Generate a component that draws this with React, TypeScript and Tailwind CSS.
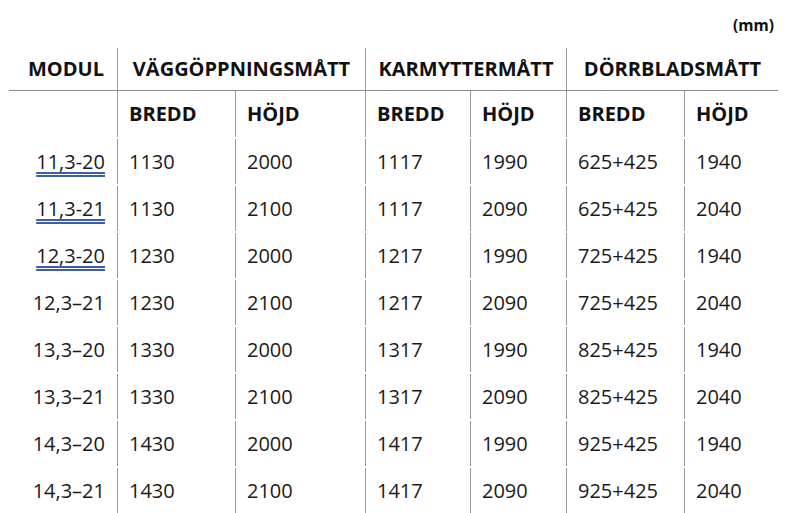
const widths = [108, 118, 130, 105, 96, 118, 94];

const rows: { modul: string; link?: boolean; vals: string[] }[] = [
  { modul: "11,3-20", link: true, vals: ["1130", "2000", "1117", "1990", "625+425", "1940"] },
  { modul: "11,3-21", link: true, vals: ["1130", "2100", "1117", "2090", "625+425", "2040"] },
  { modul: "12,3-20", link: true, vals: ["1230", "2000", "1217", "1990", "725+425", "1940"] },
  { modul: "12,3–21", vals: ["1230", "2100", "1217", "2090", "725+425", "2040"] },
  { modul: "13,3–20", vals: ["1330", "2000", "1317", "1990", "825+425", "1940"] },
  { modul: "13,3–21", vals: ["1330", "2100", "1317", "2090", "825+425", "2040"] },
  { modul: "14,3–20", vals: ["1430", "2000", "1417", "1990", "925+425", "1940"] },
  { modul: "14,3–21", vals: ["1430", "2100", "1417", "2090", "925+425", "2040"] },
];

const subs = ["BREDD", "HÖJD", "BREDD", "HÖJD", "BREDD", "HÖJD"];

export default function App() {
  return (
    <div
      className="w-[786px] h-[513px] overflow-hidden bg-white text-[#111]"
      style={{ fontFamily: '"Open Sans", "Noto Sans", sans-serif' }}
    >
      <div className="flex justify-end pr-[12px] pt-[14px] h-[48px]">
        <span className="text-[15.5px] font-bold leading-[22px]">(mm)</span>
      </div>

      <div className="ml-[9px] w-[769px]">
        {/* group header */}
        <div className="flex h-[43px] border-b border-[#8c8c8c] text-[20px] font-bold">
          <div className="w-[108px] flex items-center justify-center pl-[6px]">
            MODUL
          </div>
          <div className="w-[248px] border-l border-[#9a9a9a] flex items-center justify-center">
            VÄGGÖPPNINGSMÅTT
          </div>
          <div className="w-[201px] border-l border-[#9a9a9a] flex items-center justify-center">
            KARMYTTERMÅTT
          </div>
          <div className="w-[212px] border-l border-[#9a9a9a] flex items-center justify-center">
            DÖRRBLADSMÅTT
          </div>
        </div>

        {/* sub header */}
        <div className="flex h-[46px] text-[20px] font-bold">
          {[""].concat(subs).map((s, i) => (
            <div
              key={i}
              style={{ width: widths[i] }}
              className={
                i === 0
                  ? "flex items-center"
                  : "border-l border-[#9a9a9a] flex items-center pl-[11px]"
              }
            >
              {s}
            </div>
          ))}
        </div>

        <div className="flex flex-col gap-[2px] pt-[2px]">
          {rows.map((r) => (
            <div key={r.modul} className="flex h-[45px] text-[20px] text-[#1a1a1a]">
              <div className="w-[108px] flex items-center justify-end pr-[12px]">
                {r.link ? (
                  <span className="underline decoration-double decoration-[#3b5fae] underline-offset-[3px]">
                    {r.modul}
                  </span>
                ) : (
                  r.modul
                )}
              </div>
              {r.vals.map((v, i) => (
                <div
                  key={i}
                  style={{ width: widths[i + 1] }}
                  className="border-l border-[#9a9a9a] flex items-center pl-[11px]"
                >
                  {v}
                </div>
              ))}
            </div>
          ))}
        </div>
      </div>
    </div>
  );
}
